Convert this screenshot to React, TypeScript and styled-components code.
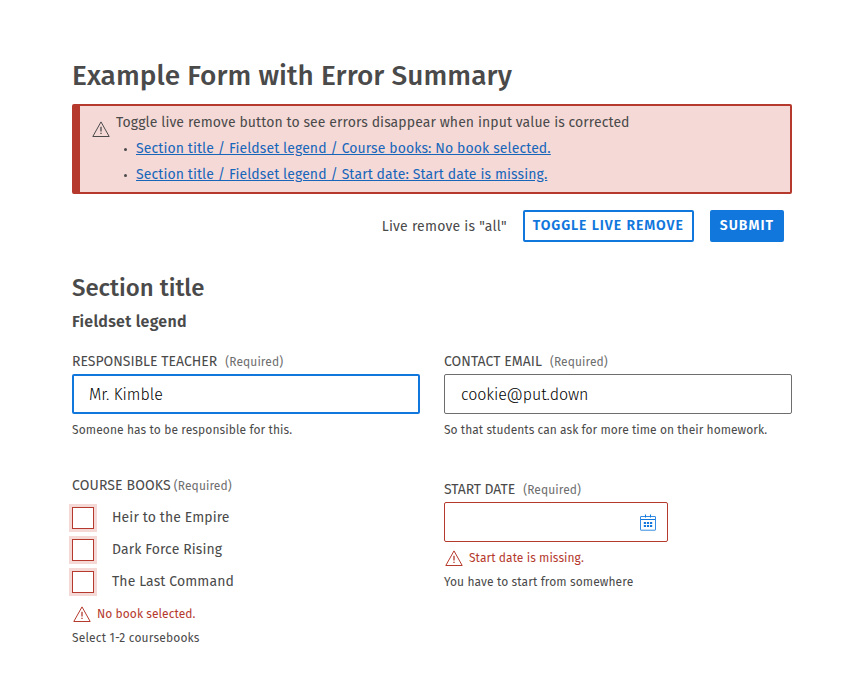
import React from "react";
import styled, { createGlobalStyle } from "styled-components";

const color = {
  text: "#4a4a4a",
  muted: "#6e6e6e",
  link: "#1766ba",
  blue: "#1177dd",
  red: "#b5392d",
  redLight: "#f5d9d7",
};

const GlobalStyle = createGlobalStyle`
  *, *::before, *::after { box-sizing: border-box; }
  body {
    margin: 0;
    background: #fff;
    color: ${color.text};
    font-family: "Fira Sans", "Noto Sans", sans-serif;
    font-size: 14px;
    line-height: 20px;
  }
`;

const Page = styled.main`
  width: 792px;
  padding: 58px 0 0 72px;
`;

const PageTitle = styled.h1`
  margin: 0 0 10px;
  font-size: 28px;
  font-weight: 500;
  line-height: 36px;
  letter-spacing: 0.065px;
`;

const Alert = styled.section`
  display: flex;
  height: 90px;
  padding: 7px 10px 0 12px;
  border: 2px solid ${color.red};
  border-left-width: 8px;
  border-radius: 2px;
  background: ${color.redLight};
`;

const AlertIcon = styled.div`
  display: flex;
  flex: none;
  width: 24px;
  padding-top: 8px;
`;

const AlertText = styled.p`
  margin: 0;
  letter-spacing: 0.09px;
`;

const ErrorList = styled.ul`
  margin: 3px 0 0;
  padding: 0;
  list-style: none;
`;

const ErrorItem = styled.li`
  display: flex;
  align-items: center;
  height: 26px;

  &::before {
    content: "";
    width: 3px;
    height: 3px;
    margin: 1px 9px 0 8px;
    border-radius: 50%;
    background: ${color.text};
  }
`;

const ErrorLink = styled.a`
  color: ${color.link};
  letter-spacing: 0.1px;
  text-decoration: underline;
`;

const Actions = styled.div`
  display: flex;
  align-items: center;
  justify-content: flex-end;
  gap: 16px;
  height: 32px;
  margin: 16px 8px 28px 0;
`;

const Status = styled.span`
  padding-top: 1px;
  letter-spacing: 0.22px;
`;

const Button = styled.button<{ $primary?: boolean }>`
  height: 32px;
  padding: 0 8px 1px;
  border: 2px solid ${color.blue};
  border-radius: 2px;
  background: ${(p) => (p.$primary ? color.blue : "#fff")};
  color: ${(p) => (p.$primary ? "#fff" : color.blue)};
  font: 600 14px/20px "Fira Sans", "Noto Sans", sans-serif;
  letter-spacing: ${(p) => (p.$primary ? 1 : 0.93)}px;
  text-transform: uppercase;
`;

const SectionTitle = styled.h2`
  margin: 0 0 6px;
  font-size: 24px;
  font-weight: 500;
  line-height: 36px;
`;

const Fieldset = styled.fieldset`
  margin: 0;
  padding: 0;
  border: 0;
`;

const Legend = styled.legend`
  padding: 0;
  margin-bottom: 20px;
  font-size: 16px;
  font-weight: 600;
  line-height: 20px;
  letter-spacing: 0.26px;
`;

const Grid = styled.div`
  display: grid;
  grid-template-columns: 348px 348px;
  column-gap: 24px;
  row-gap: 36px;
`;

const Field = styled.div<{ $offset?: number }>`
  padding-top: ${(p) => p.$offset ?? 0}px;
`;

const Label = styled.label<{ $gap: number; $track?: number }>`
  display: flex;
  align-items: baseline;
  gap: ${(p) => p.$gap}px;
  height: 22px;
  letter-spacing: ${(p) => p.$track ?? 0}px;
  text-transform: uppercase;
`;

const Required = styled.span`
  color: ${color.muted};
  font-size: 12px;
  letter-spacing: 0.1px;
  text-transform: none;
`;

const TextInput = styled.input`
  display: block;
  width: 100%;
  height: 40px;
  padding: 0 16px;
  border: 1px solid #6e6e6e;
  border-radius: 2px;
  outline: none;
  background: #fff;
  color: #000;
  font: 300 16px/24px "Fira Sans", "Noto Sans", sans-serif;
  letter-spacing: -0.1px;

  &[data-active="true"] {
    padding: 0 15px;
    border: 2px solid ${color.blue};
    letter-spacing: 0;
  }
`;

const DateControl = styled.div`
  display: flex;
  align-items: center;
  width: 224px;
  height: 40px;
  padding-right: 11px;
  border: 1px solid ${color.red};
  border-radius: 2px;
`;

const DateInput = styled.input`
  flex: 1;
  min-width: 0;
  height: 100%;
  padding: 0 16px;
  border: 0;
  outline: none;
  background: transparent;
  font: 300 16px/24px "Fira Sans", "Noto Sans", sans-serif;
`;

const IconButton = styled.button`
  display: flex;
  padding: 0;
  border: 0;
  background: none;
  color: ${color.blue};
`;

const Hint = styled.p<{ $track?: number }>`
  margin: 6px 0 0;
  font-size: 12px;
  line-height: 20px;
  letter-spacing: ${(p) => p.$track ?? 0.1}px;
`;

const FieldError = styled.p`
  display: flex;
  align-items: center;
  gap: 6px;
  height: 20px;
  margin: 6px 0 -2px;
  padding-left: 1px;
  color: ${color.red};
  font-size: 12px;
  letter-spacing: 0.06px;
`;

const CheckRow = styled.label`
  display: flex;
  align-items: center;
  gap: 18px;
  height: 32px;
  letter-spacing: 0.1px;
`;

const CheckList = styled.div`
  padding-top: 4px;
  margin-bottom: 6px;
`;

const Checkbox = styled.input.attrs({ type: "checkbox" })`
  appearance: none;
  width: 22px;
  height: 22px;
  margin: 0;
  border: 1px solid ${color.red};
  background: #fff;
  box-shadow: 0 0 0 3px ${color.redLight};
`;

const WarningIcon = () => (
  <svg width="18" height="16" viewBox="0 0 18 16" fill="none" stroke="currentColor">
    <path d="M9 0.9 17.2 15.5H0.8Z" strokeLinejoin="round" />
    <path d="M9 5.8V10.4M9 11.8V13" strokeWidth="1.3" />
  </svg>
);

const CalendarIcon = () => (
  <svg width="16" height="17" viewBox="0 0 16 17" fill="none" stroke="currentColor">
    <rect x="0.5" y="2.5" width="15" height="13.7" rx="0.4" strokeOpacity="0.85" />
    <path d="M1 5.5H15M5.5 0.5V3.5M10.5 0.5V3.5" />
    <path d="M3.8 9H12.2M3.8 12H12.2" strokeWidth="2" strokeDasharray="2.2 0.9" />
  </svg>
);

const errors = [
  "Section title / Fieldset legend / Course books: No book selected.",
  "Section title / Fieldset legend / Start date: Start date is missing.",
];

const books = ["Heir to the Empire", "Dark Force Rising", "The Last Command"];

export default function App() {
  return (
    <>
      <GlobalStyle />
      <Page>
        <PageTitle>Example Form with Error Summary</PageTitle>
        <Alert>
          <AlertIcon><WarningIcon /></AlertIcon>
          <div>
            <AlertText>Toggle live remove button to see errors disappear when input value is corrected</AlertText>
            <ErrorList>
              {errors.map((error) => (
                <ErrorItem key={error}><ErrorLink href="#">{error}</ErrorLink></ErrorItem>
              ))}
            </ErrorList>
          </div>
        </Alert>
        <Actions>
          <Status>Live remove is "all"</Status>
          <Button>Toggle live remove</Button>
          <Button $primary>Submit</Button>
        </Actions>
        <SectionTitle>Section title</SectionTitle>
        <Fieldset>
          <Legend>Fieldset legend</Legend>
          <Grid>
            <Field>
              <Label $gap={8}>Responsible teacher<Required>(Required)</Required></Label>
              <TextInput data-active="true" defaultValue="Mr. Kimble" />
              <Hint>Someone has to be responsible for this.</Hint>
            </Field>
            <Field>
              <Label $gap={8} $track={0.04}>Contact email<Required>(Required)</Required></Label>
              <TextInput defaultValue="cookie@put.down" />
              <Hint $track={0.04}>So that students can ask for more time on their homework.</Hint>
            </Field>
            <Field>
              <Label as="div" $gap={3} $track={0.12}>Course books<Required>(Required)</Required></Label>
              <CheckList>
                {books.map((book) => (
                  <CheckRow key={book}><Checkbox />{book}</CheckRow>
                ))}
              </CheckList>
              <FieldError><WarningIcon />No book selected.</FieldError>
              <Hint $track={0.18}>Select 1-2 coursebooks</Hint>
            </Field>
            <Field $offset={4}>
              <Label $gap={8} $track={-0.08}>Start date<Required>(Required)</Required></Label>
              <DateControl>
                <DateInput />
                <IconButton aria-label="Open calendar"><CalendarIcon /></IconButton>
              </DateControl>
              <FieldError><WarningIcon />Start date is missing.</FieldError>
              <Hint>You have to start from somewhere</Hint>
            </Field>
          </Grid>
        </Fieldset>
      </Page>
    </>
  );
}
